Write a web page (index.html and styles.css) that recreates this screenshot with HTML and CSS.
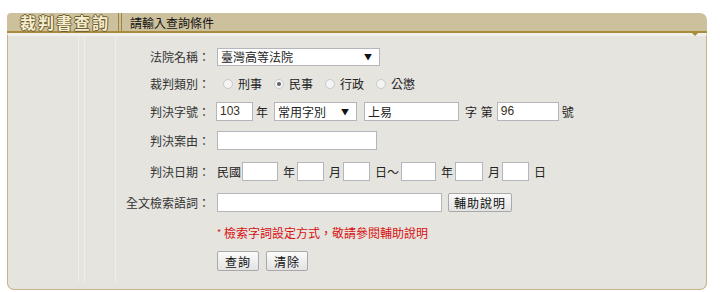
FILE: index.html
```html
<!DOCTYPE html>
<html lang="zh-Hant">
<head>
  <meta charset="UTF-8" />
  <title>裁判書查詢</title>
  <link rel="stylesheet" href="styles.css">
</head>
<body>
  <div class="panel">
    <div class="panel-head">
      <div class="tab">裁判書查詢</div>
      <div class="sep"></div>
      <div class="head-title">請輸入查詢條件</div>
      <span class="notch"></span>
    </div>

    <div class="panel-body">
      <form class="query">
        <div class="label">法院名稱：</div>
        <div class="ctrl">
          <div class="select court"><span>臺灣高等法院</span><span class="arrow">▼</span></div>
        </div>

        <div class="label">裁判類別：</div>
        <div class="ctrl">
          <span class="radio first"></span><span class="opt">刑事</span>
          <span class="radio checked"></span><span class="opt">民事</span>
          <span class="radio"></span><span class="opt">行政</span>
          <span class="radio"></span><span class="opt">公懲</span>
        </div>

        <div class="label">判決字號：</div>
        <div class="ctrl">
          <div class="input w-year num">103</div>
          <span class="txt">年</span>
          <div class="select word"><span>常用字別</span><span class="arrow">▼</span></div>
          <div class="input w-word">上易</div>
          <span class="txt wide">字 第</span>
          <div class="input w-no num">96</div>
          <span class="txt">號</span>
        </div>

        <div class="label">判決案由：</div>
        <div class="ctrl">
          <div class="input w-reason"></div>
        </div>

        <div class="label">判決日期：</div>
        <div class="ctrl dates">
          <span class="txt">民國</span>
          <div class="input d-y1"></div>
          <span class="txt">年</span>
          <div class="input d-m"></div>
          <span class="txt">月</span>
          <div class="input d-m"></div>
          <span class="txt">日～</span>
          <div class="input d-y2"></div>
          <span class="txt">年</span>
          <div class="input d-m2"></div>
          <span class="txt">月</span>
          <div class="input d-m"></div>
          <span class="txt">日</span>
        </div>

        <div class="label">全文檢索語詞：</div>
        <div class="ctrl">
          <div class="input w-full"></div>
          <button type="button" class="btn help">輔助說明</button>
        </div>

        <div class="label"></div>
        <div class="ctrl">
          <span class="note"><small>*</small> 檢索字詞設定方式，敬請參閱輔助說明</span>
        </div>

        <div class="label"></div>
        <div class="ctrl">
          <button type="button" class="btn">查詢</button>
          <button type="button" class="btn">清除</button>
        </div>
      </form>
    </div>
  </div>
</body>
</html>
```

FILE: styles.css
```css
body {
  margin: 0;
  background: #ffffff;
  font-family: "Noto Sans CJK TC", "Noto Sans", sans-serif;
  font-size: 12px;
  color: #222;
}

.panel {
  width: 700px;
  margin: 13px 0 0 7px;
}

.panel-head {
  position: relative;
  display: flex;
  align-items: center;
  height: 18px;
  background: #cdc09d;
  border-bottom: 2px solid #a88c3c;
  border-radius: 4px 7px 0 0;
}
.tab {
  padding-left: 13px;
  width: 97px;
  font-size: 16px;
  font-weight: bold;
  letter-spacing: 2px;
  line-height: 18px;
  color: #f6eed2;
  text-shadow: 1px 0 0 #6e5d2c, -1px 0 0 #6e5d2c, 0 1px 0 #6e5d2c, 0 -1px 0 #6e5d2c;
}
.sep {
  width: 2px;
  height: 18px;
  margin-left: 1px;
  border-left: 1px solid #9a8444;
  border-right: 1px solid #9a8444;
}
.head-title {
  margin-left: 8px;
  font-size: 12px;
  color: #111;
}
.notch {
  position: absolute;
  right: 9px;
  bottom: -5px;
  border-left: 3px solid transparent;
  border-right: 3px solid transparent;
  border-top: 3px solid #a88c3c;
}

.panel-body {
  height: 253px;
  background-color: #e5e4df;
  border-top: 3px solid #f0efea;
  border-left: 1px solid #c2b486;
  border-right: 1px solid #c2b486;
  border-bottom: 1px solid #c2b486;
  border-radius: 0 0 7px 7px;
  background-image:
    linear-gradient(#efeeea, #efeeea),
    linear-gradient(#efeeea, #efeeea),
    linear-gradient(#efeeea, #efeeea);
  background-size: 1px 246px;
  background-position: 70px 0, 76px 0, 107px 0;
  background-repeat: no-repeat;
}

.query {
  display: grid;
  grid-template-columns: 202px 1fr;
  grid-template-rows: 27px 27px 28px 31px 31px 31px 29px 28px;
  column-gap: 7px;
  padding-top: 7px;
  align-items: center;
}
.label {
  text-align: right;
  color: #333;
}
.ctrl {
  display: flex;
  align-items: center;
  white-space: nowrap;
}

.input, .select {
  box-sizing: border-box;
  height: 19px;
  background: #fff;
  border: 1px solid #b4b6bb;
  padding: 0 3px;
  line-height: 17px;
  color: #222;
}
.num {
  font-family: "Liberation Sans", Arial, sans-serif;
  color: #3a3020;
}
.select {
  display: flex;
  justify-content: space-between;
  align-items: center;
}
.arrow {
  font-size: 8px;
  color: #111;
  padding-right: 4px;
}
.court { width: 163px; height: 18px; }
.word { width: 83px; margin-left: 4px; }

.w-year { width: 37px; margin-left: -1px; }
.w-word { width: 95px; margin-left: 7px; }
.w-no { width: 62px; }
.w-reason { width: 160px; }
.w-full { width: 225px; }

.txt { margin: 0 2px 0 3px; }
.txt.wide { margin: 0 4px 0 6px; word-spacing: 1px; }

.dates .txt { margin: 0; }
.dates .input { margin-left: 2px; margin-right: 5px; }
.dates .d-y1 { margin-left: 1px; }
.d-y1 { width: 36px; }
.d-m { width: 27px; }
.d-y2 { width: 35px; }
.d-m2 { width: 28px; }

.radio {
  box-sizing: border-box;
  width: 10px;
  height: 10px;
  border: 1px solid #c9c9c9;
  border-radius: 50%;
  background: #f4f4f4;
  margin: 0 5px 0 12px;
}
.radio.first { margin-left: 6px; }
.radio.checked {
  background: radial-gradient(circle, #666 0 1.5px, #f4f4f4 2.5px);
}
.opt { color: #222; }

.btn {
  box-sizing: border-box;
  width: 42px;
  height: 20px;
  padding: 0;
  margin-right: 7px;
  font-family: "Noto Sans CJK TC", sans-serif;
  font-size: 12px;
  letter-spacing: 1px;
  white-space: nowrap;
  color: #111;
  background: linear-gradient(#fbfbfb, #e3e3e3);
  border: 1px solid #a9a9a9;
  border-radius: 2px;
}
.help { margin-left: 6px; height: 19px; width: 64px; }

.note {
  color: #d80f0f;
}
.note small { font-size: 9px; vertical-align: 2px; }
```
